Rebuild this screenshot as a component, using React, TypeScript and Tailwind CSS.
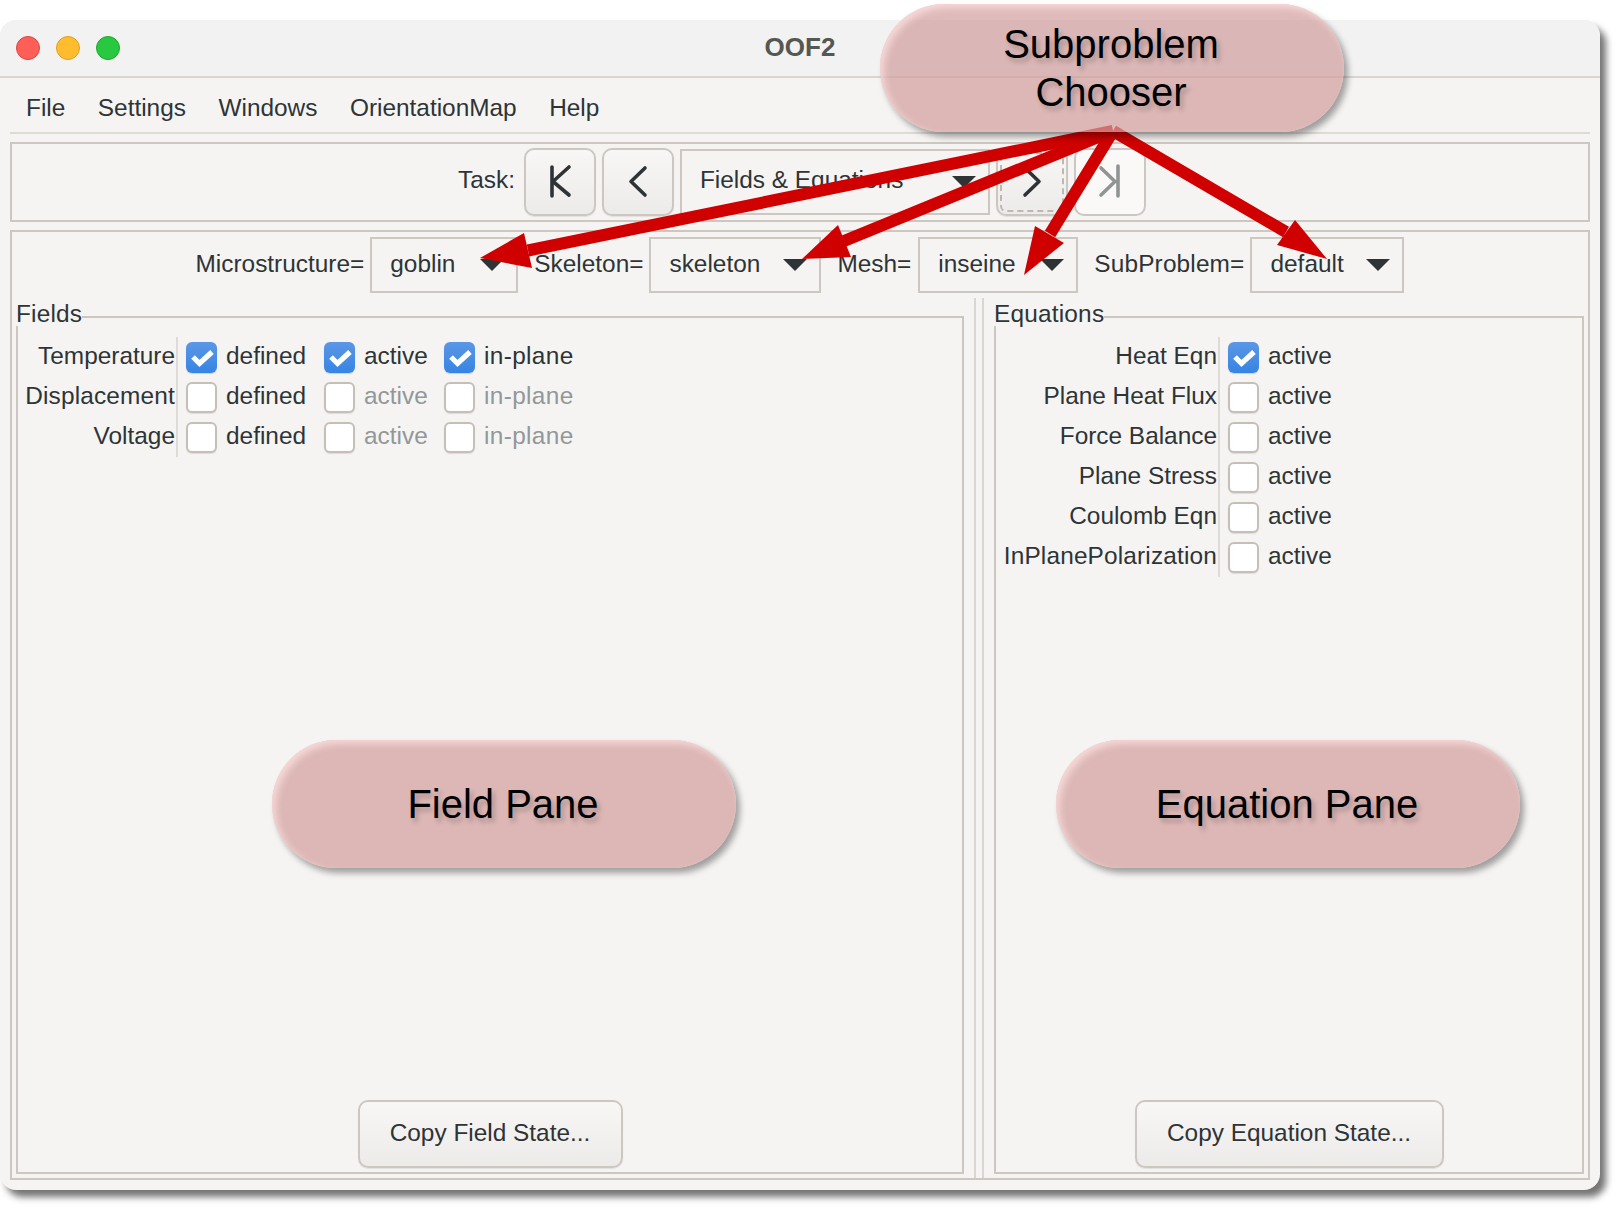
const ink = '#2e3436';

const Triangle = () => (
  <svg width="24" height="12" viewBox="0 0 24 12" className="shrink-0">
    <polygon points="0,0 24,0 12,12" fill={ink} />
  </svg>
);

const Dropdown = ({ value, width }: { value: string; width: string }) => (
  <div className={`${width} h-[56px] flex items-center justify-between pl-[18px] pr-[12px] border-2 border-[#cdc7c2]`}>
    <span className="pb-[2px]">{value}</span>
    <Triangle />
  </div>
);

const NavButton = ({ kind }: { kind: 'first' | 'prev' | 'next' | 'last' }) => {
  const isLast = kind === 'last';
  const isNext = kind === 'next';
  return (
    <div
      className={`relative w-[72px] h-[68px] rounded-[10px] border-2 border-[#cdc7c2] flex items-center justify-center ${
        isLast ? 'bg-[#faf9f8]' : 'bg-gradient-to-b from-[#f8f7f6] to-[#edebe9] shadow-[0_1px_1px_rgba(0,0,0,0.08)]'
      }`}
    >
      {isNext && <div className="absolute inset-[2px] rounded-[6px] border-2 border-dashed border-[#bcb9b5]" />}
      <svg width="70" height="66" viewBox="0 0 70 66" fill="none" strokeWidth="3.6" strokeLinecap="round" strokeLinejoin="round" stroke={isLast ? '#919494' : ink} className="shrink-0">
        {kind === 'first' && <path d="M27 18V47M44 18L28 32.5L44 46" />}
        {kind === 'prev' && <path d="M42 19L28 32.5L42 46" />}
        {kind === 'next' && <path d="M28 19L42 32.5L28 46" />}
        {kind === 'last' && <path d="M26 19L40 32.5L26 46M43 17V47" />}
      </svg>
    </div>
  );
};

const Checkbox = ({ checked }: { checked?: boolean }) =>
  checked ? (
    <div className="w-[31px] h-[31px] shrink-0 rounded-[6px] bg-gradient-to-b from-[#5b97e6] to-[#3584e4] shadow-[0_1px_1px_rgba(0,0,0,0.15)]">
      <svg width="31" height="31" viewBox="0 0 31 31" fill="none">
        <path d="M7 15L13.5 21.5L26 10" stroke="white" strokeWidth="5.2" />
      </svg>
    </div>
  ) : (
    <div className="w-[31px] h-[31px] shrink-0 rounded-[6px] border-2 border-[#c6bfb8] bg-white shadow-[0_1px_1px_rgba(0,0,0,0.1)]" />
  );

const CheckItem = ({ label, checked, dim, width, track }: { label: string; checked?: boolean; dim?: boolean; width: string; track?: string }) => (
  <div className={`${width} flex items-center gap-[9px]`}>
    <Checkbox checked={checked} />
    <span className={`pb-[3px] ${dim ? 'text-[#92979a]' : ''} ${track ?? ''}`}>{label}</span>
  </div>
);

const fields = [
  { name: 'Temperature', on: true, track: '' },
  { name: 'Displacement', on: false, track: 'tracking-[0.17px]' },
  { name: 'Voltage', on: false, track: '' },
];

const equations = [
  { name: 'Heat Eqn', on: true, track: '' },
  { name: 'Plane Heat Flux', on: false, track: '' },
  { name: 'Force Balance', on: false, track: '' },
  { name: 'Plane Stress', on: false, track: '' },
  { name: 'Coulomb Eqn', on: false, track: '' },
  { name: 'InPlanePolarization', on: false, track: 'tracking-[0.16px]' },
];

const Frame = ({ title, button, width, children }: { title: string; button: string; width: string; children: React.ReactNode }) => (
  <div className="relative flex-1 flex flex-col border-2 border-[#cdc7c2] pt-[19px] pb-[4px]">
    <div className="absolute left-[-2px] top-[-16px] h-[24px] leading-[24px] tracking-[0.2px] bg-[#f5f4f2]">{title}</div>
    {children}
    <button className={`${width} h-[68px] mt-auto self-center pb-[3px] rounded-[10px] border-2 border-[#cdc7c2] bg-gradient-to-b from-[#f8f7f6] to-[#edebe9] shadow-[0_1px_1px_rgba(0,0,0,0.08)]`}>
      {button}
    </button>
  </div>
);

const Pill = ({ className, children }: { className: string; children: React.ReactNode }) => (
  <div
    className={`absolute w-[464px] h-[128px] rounded-full bg-[#d19c9c]/70 flex items-center justify-center pr-[2px] text-center text-black text-[40px] leading-[48px] shadow-[4px_5px_6px_rgba(0,0,0,0.35),inset_4px_4px_7px_rgba(255,226,226,0.75)] [text-shadow:3px_4px_5px_rgba(0,0,0,0.22)] ${className}`}
  >
    {children}
  </div>
);

const arrows = [
  { to: '528,250.5', head: '480,258 524,233 532,268' },
  { to: '844,241', head: '802,259 838,225 851,257' },
  { to: '1050,234', head: '1024,275 1035,226 1064,243' },
  { to: '1286,232', head: '1327,259 1295,220 1277,245' },
];

export default function App() {
  return (
    <div className="relative w-[1620px] h-[1210px] bg-white overflow-hidden pt-[20px] font-['Liberation_Sans',Arial,sans-serif] text-[24.4px] leading-[28px] text-[#2e3436]">
      <div className="w-[1600px] h-[1170px] rounded-[16px] bg-[#f5f4f2] flex flex-col shadow-[6px_7px_7px_rgba(0,0,0,0.55)]">
        {/* title bar */}
        <div className="relative h-[58px] shrink-0 rounded-t-[16px] bg-[#f2f2f2] border-b-2 border-[#d9d6d2] flex items-center justify-center pb-[2px]">
          <div className="absolute left-[16px] top-[16px] flex gap-[16px]">
            <div className="w-[24px] h-[24px] rounded-full bg-[#ff5f57] border border-[#e0443e]" />
            <div className="w-[24px] h-[24px] rounded-full bg-[#febc2e] border border-[#dea123]" />
            <div className="w-[24px] h-[24px] rounded-full bg-[#28c840] border border-[#1aab29]" />
          </div>
          <span className="font-bold text-[#555753] text-[26px]">OOF2</span>
        </div>

        <div className="flex-1 flex flex-col px-[10px] pb-[10px]">
          {/* menu bar */}
          <div className="h-[56px] shrink-0 border-b-2 border-[#dedbd7] flex items-center gap-[32.5px] pl-[16px] pt-[6px]">
            <span>File</span>
            <span>Settings</span>
            <span>Windows</span>
            <span>OrientationMap</span>
            <span>Help</span>
          </div>

          {/* task row */}
          <div className="h-[80px] shrink-0 mt-[8px] border-2 border-[#cdc7c2] flex items-center justify-center pl-[4px]">
            <span className="mr-[9px] pb-[4px]">Task:</span>
            <div className="flex items-center gap-[6px]">
              <NavButton kind="first" />
              <NavButton kind="prev" />
              <div className="w-[310px] h-[66px] flex items-center justify-between pl-[18px] pr-[12px] border-2 border-[#cdc7c2]">
                <span className="pb-[4px]">Fields &amp; Equations</span>
                <Triangle />
              </div>
              <NavButton kind="next" />
              <NavButton kind="last" />
            </div>
          </div>

          {/* subproblem chooser + panes */}
          <div className="flex-1 mt-[8px] border-2 border-[#cdc7c2] flex flex-col pt-[5px]">
            <div className="h-[56px] shrink-0 flex items-center justify-center">
              <span className="mr-[6px] pb-[2px]">Microstructure=</span>
              <Dropdown value="goblin" width="w-[148px]" />
              <span className="ml-[16px] mr-[6px] pb-[2px]">Skeleton=</span>
              <Dropdown value="skeleton" width="w-[172px]" />
              <span className="ml-[16px] mr-[7px] pb-[2px]">Mesh=</span>
              <Dropdown value="inseine" width="w-[160px]" />
              <span className="ml-[16px] mr-[6px] pb-[2px] tracking-[0.15px]">SubProblem=</span>
              <Dropdown value="default" width="w-[154px]" />
            </div>

            <div className="flex-1 mt-[5px] flex">
              <div className="w-[962px] shrink-0 flex pl-[4px] pr-[10px] pt-[18px] pb-[4px]">
                <Frame title="Fields" button="Copy Field State..." width="w-[265px]">
                  {fields.map((f, i) => (
                    <div key={f.name} className="h-[40px] flex items-center">
                      <div className={`w-[160px] h-full shrink-0 flex items-center justify-end pr-[1px] pb-[3px] border-r-2 border-[#dedbd7] ${f.track}`}>{f.name}</div>
                      <div className="flex items-center pl-[8px]">
                        <CheckItem label="defined" checked={f.on} width="w-[138px]" />
                        <CheckItem label="active" checked={f.on} dim={i > 0} width="w-[120px]" />
                        <CheckItem label="in-plane" checked={f.on} dim={i > 0} width="w-[140px]" track="tracking-[0.35px]" />
                      </div>
                    </div>
                  ))}
                </Frame>
              </div>

              <div className="w-[10px] shrink-0 border-x-2 border-[#dad6d2]" />

              <div className="flex-1 flex pl-[10px] pr-[4px] pt-[18px] pb-[4px]">
                <Frame title="Equations" button="Copy Equation State..." width="w-[309px]">
                  {equations.map(eq => (
                    <div key={eq.name} className="h-[40px] flex items-center">
                      <div className={`w-[224px] h-full shrink-0 flex items-center justify-end pr-[1px] pb-[3px] border-r-2 border-[#dedbd7] ${eq.track}`}>{eq.name}</div>
                      <div className="flex items-center pl-[8px]">
                        <CheckItem label="active" checked={eq.on} width="w-[120px]" />
                      </div>
                    </div>
                  ))}
                </Frame>
              </div>
            </div>
          </div>
        </div>
      </div>

      {/* annotation arrows */}
      <svg className="absolute left-0 top-0 pointer-events-none" width="1620" height="1210" viewBox="0 0 1620 1210">
        {arrows.map(a => {
          const [x, y] = a.to.split(',');
          return (
            <g key={a.to} fill="#d00000" stroke="none">
              <line x1="1113" y1="131" x2={x} y2={y} stroke="#d00000" strokeWidth="12" />
              <polygon points={a.head} />
            </g>
          );
        })}
      </svg>

      {/* annotation callouts */}
      <Pill className="left-[880px] top-[4px]">
        <span>
          Subproblem
          <br />
          Chooser
        </span>
      </Pill>
      <Pill className="left-[272px] top-[740px]">Field Pane</Pill>
      <Pill className="left-[1056px] top-[740px]">Equation Pane</Pill>
    </div>
  );
}
